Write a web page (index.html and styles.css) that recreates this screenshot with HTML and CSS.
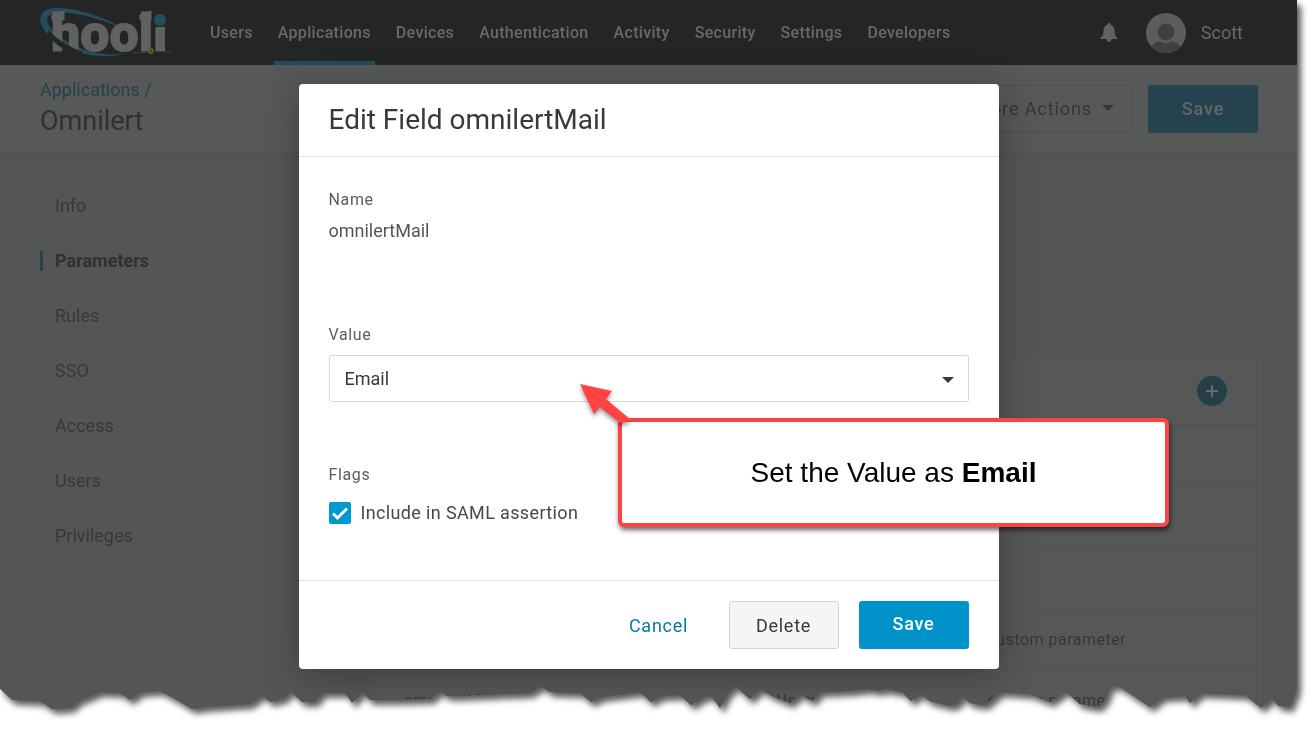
FILE: index.html
```html
<!DOCTYPE html>
<html lang="en">
<head>
<meta charset="utf-8">
<meta name="viewport" content="width=device-width, initial-scale=1">
<title>Edit Field omnilertMail</title>
<link rel="stylesheet" href="styles.css">
</head>
<body>
<svg class="defs" width="0" height="0" aria-hidden="true">
  <clipPath id="torn" clipPathUnits="objectBoundingBox">
    <path transform="scale(.00077101 .00138889)" d="M0 0H1297V689L1290 707L1278 706L1272 698L1261 708L1245 695L1222 694L1200 693L1190 703L1185 696L1162 697L1150 707L1135 697L1120 687L1111 685L1105 700L1098 707L1080 704L1065 691L1050 702L1030 694L1000 692L985 705L970 703L962 696L958 703L950 706L930 701L920 694L911 701L902 692L885 689L880 691L867 689L850 691L820 692L812 701L800 694L790 703L772 696L760 689L750 699L735 686L727 694L720 708L712 697L705 696L691 705L680 695L660 696L651 702L640 692L600 697L591 702L580 693L550 692L541 686L530 693L500 694L480 695L447 696L440 691L430 699L370 700L362 692L352 703L345 693L322 693L315 702L302 702L290 691L285 698L270 702L262 695L250 704L205 707L192 709L175 699L160 691L140 692L130 700L120 693L100 692L80 700L70 708L52 709L40 701L12 700L0 689Z"/>
  </clipPath>
</svg>
<div class="stage">
  <div class="shot">
    <header class="topbar">
      <a class="logo" href="#" aria-label="hooli">
        <svg width="140" height="65" viewBox="0 -8 140 65">
          <path class="logo-ring" d="M84 21C57 4 15-6 3 4C-8 17 17 40 45 46C63 50 78 48 86 45C65 49 45 44 28 34C9 23 2 11 11 6C22 1 56 8 84 21Z"/>
          <text class="logo-text" x="11" y="43">hooli</text>
          <path class="logo-text" d="M12 7L24 3V12H12ZM100 7L111 3V12H100Z"/>
          <path class="logo-cut" d="M9 22C17 32 28 38 43 44L38 47C23 42 14 35 7 27Z"/>
          <path class="logo-dot-bg" d="M113 0h17v19h-17z"/>
          <circle class="logo-dot" cx="120" cy="12" r="6"/>
          <path class="logo-line" d="M92 44.500h14M115 43.500h16"/>
          <circle class="logo-badge" cx="111" cy="43" r="2"/>
        </svg>
      </a>
      <nav class="menu">
        <a href="#">Users</a>
        <a class="current" href="#">Applications</a>
        <a href="#">Devices</a>
        <a href="#">Authentication</a>
        <a href="#">Activity</a>
        <a href="#">Security</a>
        <a href="#">Settings</a>
        <a href="#">Developers</a>
      </nav>
      <div class="account">
        <svg class="bell" width="18" height="20" viewBox="0 0 18 20"><path d="M9 0c1 0 1.500.7 1.500 1.700C13.200 2.500 14.500 5 14.600 8c.1 4 .9 5.500 2.900 7v1H.5v-1c2-1.500 2.800-3 2.900-7 .1-3 1.400-5.500 4.100-6.300C7.500.7 8 0 9 0zM6.500 16h5c-.3 2-1.200 3-2.500 3s-2.200-1-2.500-3z"/></svg>
        <svg class="avatar" width="40" height="40" viewBox="0 0 40 40">
          <circle class="avatar-bg" cx="20" cy="20" r="20"/>
          <circle class="avatar-fg" cx="20" cy="19" r="8.500"/>
          <path class="avatar-fg" d="M5.500 33.500C8 30 11 28.500 14.500 28.500C18 31 22 31 25.500 28.500C29 28.500 32 30 34.500 33.500C27 42 13 42 5.500 33.500Z"/>
        </svg>
        <span class="user">Scott</span>
      </div>
    </header>

    <div class="pagebar">
      <div class="heading">
        <a class="crumb" href="#">Applications /</a>
        <h1 class="title">Omnilert</h1>
      </div>
      <div class="actions">
        <button class="more" type="button">More Actions <span class="caret"></span></button>
        <button class="page-save" type="button">Save</button>
      </div>
    </div>

    <div class="content">
      <nav class="side">
        <a href="#">Info</a>
        <a class="active" href="#">Parameters</a>
        <a href="#">Rules</a>
        <a href="#">SSO</a>
        <a href="#">Access</a>
        <a href="#">Users</a>
        <a href="#">Privileges</a>
      </nav>
      <div class="main">
        <table class="params">
          <thead>
            <tr><th></th><th></th><th class="add-cell"><button class="add" type="button" aria-label="Add parameter"><svg width="14" height="14" viewBox="0 0 14 14"><path d="M7 1v12M1 7h12"/></svg></button></th></tr>
          </thead>
          <tbody>
            <tr><td></td><td></td><td></td></tr>
            <tr><td></td><td></td><td></td></tr>
            <tr><td></td><td></td><td></td></tr>
            <tr><td></td><td></td><td>custom parameter</td></tr>
            <tr><td>omnilertMail</td><td>Username</td><td>custom parameter</td></tr>
          </tbody>
        </table>
      </div>
    </div>

    <section class="modal" role="dialog" aria-labelledby="dialog-title">
      <h2 class="modal-title" id="dialog-title">Edit Field omnilertMail</h2>
      <div class="modal-body">
        <div class="field">
          <div class="label">Name</div>
          <div class="static">omnilertMail</div>
        </div>
        <div class="field field-value">
          <label class="label" for="value">Value</label>
          <div class="select-wrap">
            <select class="select" id="value"><option>Email</option></select>
            <span class="caret select-caret"></span>
          </div>
        </div>
        <div class="field">
          <div class="label">Flags</div>
          <label class="check"><input type="checkbox" checked><svg class="tick" width="22" height="22" viewBox="0 0 22 22"><path d="M4 11.500l4.500 4.500L18 6.500"/></svg><span>Include in SAML assertion</span></label>
        </div>
      </div>
      <footer class="modal-foot">
        <button class="btn cancel" type="button">Cancel</button>
        <button class="btn delete" type="button">Delete</button>
        <button class="btn save" type="button">Save</button>
      </footer>
    </section>
  </div>

  <aside class="callout">
    <svg class="arrow" width="60" height="50" viewBox="0 0 60 50"><path d="M2 3L34 10L28 18L53 39L42 42L22 26L16 33Z"/></svg>
    <p class="callout-text">Set the Value as <strong>Email</strong></p>
  </aside>
</div>
</body>
</html>
```
FILE: styles.css
```css
* { box-sizing: border-box; }
body { margin: 0; background: #fff; color: #393939; font-family: Roboto, sans-serif; font-size: 18px; overflow: hidden; }
a { color: inherit; text-decoration: none; }
button, select { font: inherit; color: inherit; cursor: pointer; }
h1, h2, p { margin: 0; font-weight: 400; }
.defs { position: absolute; }

.stage { position: relative; padding-right: 16px; filter: drop-shadow(4px 5px 3px rgba(0, 0, 0, .65)); }
.shot { position: relative; display: flex; flex-direction: column; height: calc(100vh - 12px); overflow: hidden; background: #545655; clip-path: url(#torn); }

.topbar { display: flex; flex: none; height: 65px; padding: 0 54px 0 40px; background: #242625; color: #686a69; }
.logo { width: 170px; }
.logo-text { font: 900 52px Roboto, sans-serif; fill: #606261; stroke: #606261; }
.logo-ring, .logo-dot { fill: #254c5c; }
.logo-cut, .logo-dot-bg { fill: #242625; }
.logo-line { stroke: #3b3d3c; }
.logo-badge { fill: none; stroke: #52602c; stroke-width: 2; }
.menu { display: flex; gap: 17px; font-size: 16px; font-weight: 500; line-height: 65px; letter-spacing: .02em; margin-left: -4px; }
.menu a { height: 65px; padding: 0 4px; }
.menu .current { box-shadow: inset 0 -4px #254c5c; }
.account { display: flex; align-items: center; margin-left: auto; }
.bell { fill: #606261; margin-right: 28px; }
.avatar { margin-right: 15px; }
.avatar-bg { fill: #5b5d5c; }
.avatar-fg { fill: #3f4140; }

.pagebar { display: flex; flex: none; justify-content: space-between; height: 88px; padding: 12px 39px 0 40px; background: #575958; border-bottom: 1px solid #505251; }
.crumb { display: block; color: #25414b; line-height: 26px; }
.title { color: #303030; font-size: 27px; line-height: 36px; }
.actions { display: flex; gap: 15px; padding-top: 8px; }
.actions button { height: 48px; border-radius: 3px; letter-spacing: .05em; }
.more { display: flex; align-items: center; gap: 10px; padding: 0 18px 2px; background: none; border: 1px solid #4d4f4e; color: #363636; }
.caret { border: 6px solid transparent; border-top-color: currentColor; border-bottom: 0; }
.page-save { width: 110px; padding: 0 0 2px; border: 0; background: #25434f; color: #656867; font-weight: 500; }

.content { display: flex; }
.side { flex: none; width: 333px; padding-top: 25px; color: #373938; }
.side a { display: flex; align-items: center; height: 55px; padding-left: 55px; }
.side .active { background: linear-gradient(#25434f, #25434f) 40px 50% / 3px 20px no-repeat; color: #303030; font-weight: 700; }
.main { flex: 1; padding: 202px 40px 0; }
.params { width: 100%; table-layout: fixed; border-collapse: collapse; border: 1px solid #525453; background: #565857; color: #373737; font-size: 16px; letter-spacing: .03em; }
.params th { height: 70px; border-bottom: 1px solid #4c4e4d; }
.params td { height: 61px; padding: 0 0 0 30px; border-bottom: 1px solid #525453; }
.params th:first-child { width: 373px; }
.params th:nth-child(2) { width: 211px; }
.params .add-cell { padding: 0 29px 0 0; text-align: right; letter-spacing: 0; }
.add { display: inline-flex; align-items: center; justify-content: center; width: 30px; height: 30px; padding: 0; border: 0; border-radius: 50%; background: #253f4a; vertical-align: middle; }
.add path { stroke: #686a69; stroke-width: 2; }

.modal { position: absolute; top: 84px; left: 0; right: 0; width: 700px; margin: 0 auto; border-radius: 4px; background: #fff; box-shadow: 0 6px 36px rgba(0, 0, 0, .3); }
.modal-title { padding: 16px 30px; border-bottom: 1px solid #dfe1e1; font-size: 28px; line-height: 40px; }
.modal-body { padding: 31px 30px 55px; }
.label { display: block; color: #5c5e5e; font-size: 16px; line-height: 24px; letter-spacing: .04em; }
.static { padding-top: 7px; color: #555; line-height: 24px; }
.field-value { padding: 80px 0 61px; }
.select-wrap { position: relative; margin-top: 8px; }
.select { display: block; width: 100%; height: 47px; padding: 0 15px; border: 1px solid #d5d9d9; border-radius: 2px; background: #fff; appearance: none; }
.select-caret { position: absolute; top: 22px; right: 15px; pointer-events: none; }
.check { position: relative; display: flex; align-items: center; gap: 10px; margin-top: 14px; color: #484848; line-height: 24px; letter-spacing: .02em; }
.check input { appearance: none; width: 22px; height: 22px; margin: 0; border-radius: 2px; background: #0098d0; }
.tick { position: absolute; left: 0; fill: none; stroke: #fff; stroke-width: 3; }
.modal-foot { display: flex; justify-content: flex-end; gap: 20px; padding: 20px 30px; border-top: 1px solid #dfe1e1; }
.btn { width: 110px; height: 48px; padding: 0; border: 0; border-radius: 3px; letter-spacing: .04em; }
.cancel { width: 100px; background: none; color: #007ca6; }
.delete { background: #f4f6f6; border: 1px solid #d0d4d4; }
.save { background: #0092c8; color: #fff; font-weight: 500; padding-bottom: 4px; }

.callout { position: absolute; top: 418px; left: 618px; display: flex; align-items: center; justify-content: center; width: 551px; height: 109px; border: 4px solid #ff4244; border-radius: 6px; background: #fff; color: #000; box-shadow: 1px 3px 5px rgba(0, 0, 0, .6); }
.callout-text { font: 28px "Liberation Sans", Arial, sans-serif; }
.arrow { position: absolute; top: -41px; left: -44px; fill: #ff4244; filter: drop-shadow(0 3px 2px rgba(0, 0, 0, .4)); }
```
